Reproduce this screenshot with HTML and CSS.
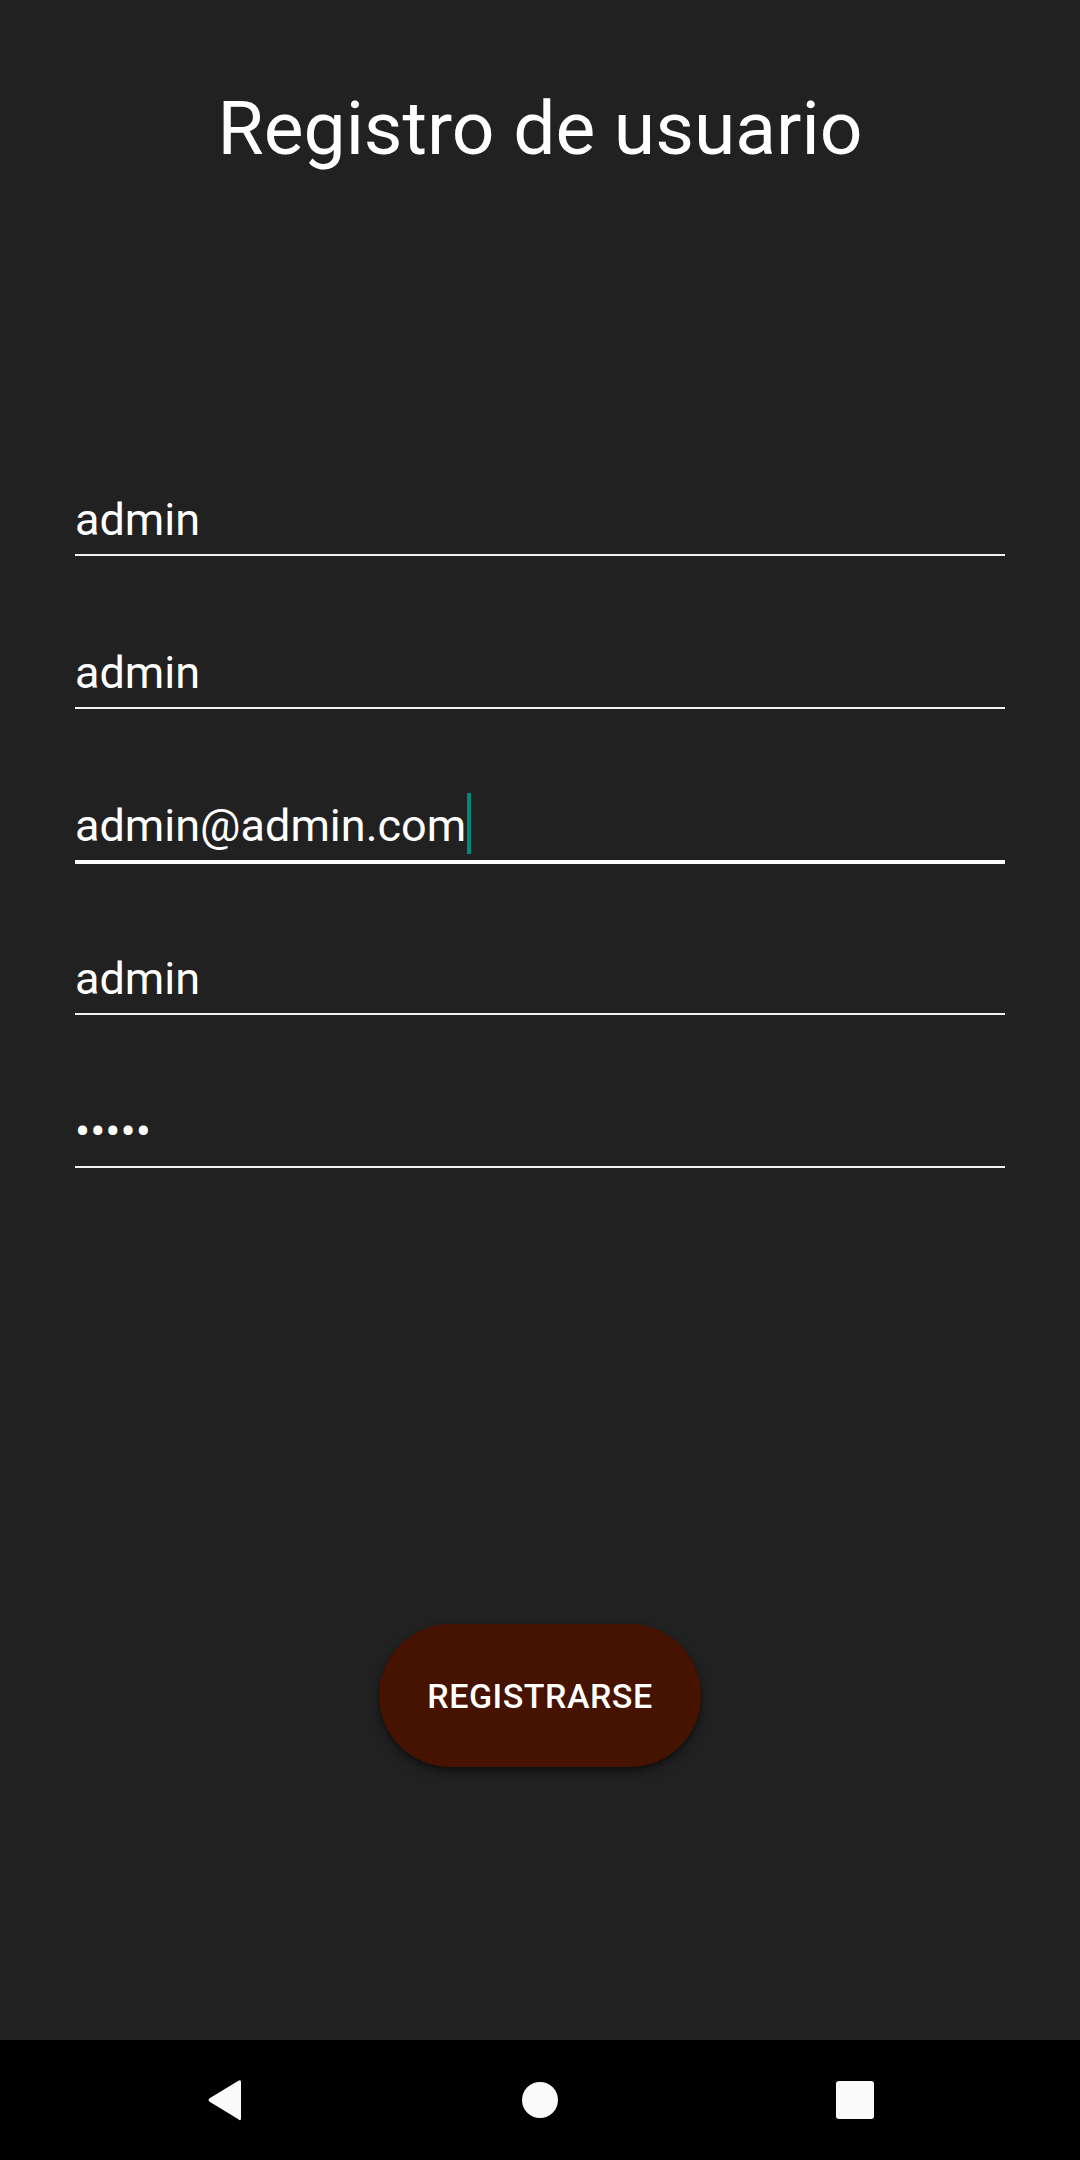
FILE: index.html
```html
<!DOCTYPE html>
<html lang="es">
<head>
<meta charset="utf-8">
<title>Registro de usuario</title>
<link rel="stylesheet" href="styles.css">
</head>
<body>
<div class="screen">
  <main class="content">
    <h1 class="title">Registro de usuario</h1>
    <form class="form">
      <div class="field"><span class="value">admin</span></div>
      <div class="field"><span class="value">admin</span></div>
      <div class="field focused"><span class="value">admin@admin.com</span><span class="cursor"></span></div>
      <div class="field"><span class="value">admin</span></div>
      <div class="field"><span class="value dots">•••••</span></div>
    </form>
    <div class="actions">
      <button class="btn" type="button">REGISTRARSE</button>
    </div>
  </main>
  <nav class="navbar">
    <span class="nav-slot">
      <svg width="40" height="44" viewBox="0 0 40 44"><path d="M36 4 L36 40 Q36 44 33 41 L5 24 Q2 22 5 20 L33 3 Q36 1 36 4 Z" fill="#fafafa"/></svg>
    </span>
    <span class="nav-slot">
      <svg width="40" height="40" viewBox="0 0 40 40"><circle cx="20" cy="20" r="18" fill="#fafafa"/></svg>
    </span>
    <span class="nav-slot">
      <svg width="40" height="40" viewBox="0 0 40 40"><rect x="1" y="1" width="38" height="38" rx="3" fill="#fafafa"/></svg>
    </span>
  </nav>
</div>
</body>
</html>
```

FILE: styles.css
```css
* { box-sizing: border-box; }
html, body {
  margin: 0;
  padding: 0;
  background: #212121;
}
body {
  font-family: Roboto, "Liberation Sans", sans-serif;
  color: #ffffff;
}
.screen {
  width: 1080px;
  height: 2160px;
  display: flex;
  flex-direction: column;
}
.content {
  flex: 1;
  display: flex;
  flex-direction: column;
}
.title {
  margin: 84px 0 0;
  font-size: 75px;
  line-height: 88px;
  font-weight: 400;
  text-align: center;
  color: #ffffff;
}
.form {
  margin: 321px 75px 0;
  display: flex;
  flex-direction: column;
  gap: 90px;
}
.field {
  height: 63px;
  padding-bottom: 7px;
  border-bottom: 2px solid #f2f2f2;
  font-size: 45px;
  line-height: 54px;
  white-space: nowrap;
}
.field.focused {
  border-bottom-color: #ffffff;
  box-shadow: 0 2px 0 #ffffff;
}
.value { color: #ffffff; }
.cursor {
  display: inline-block;
  width: 4px;
  height: 61px;
  margin-top: -8px;
  margin-left: 1px;
  vertical-align: -13px;
  background: #00897b;
}
.actions {
  display: flex;
  justify-content: center;
  margin-top: 456px;
}
.btn {
  width: 322px;
  height: 143px;
  border: none;
  border-radius: 72px;
  background: #451300;
  color: #ffffff;
  font-family: Roboto, "Liberation Sans", sans-serif;
  font-weight: 500;
  font-size: 34px;
  letter-spacing: 0.5px;
  box-shadow: 0 6px 10px rgba(0,0,0,0.35), 0 2px 4px rgba(0,0,0,0.3);
  padding: 0;
}
.navbar {
  height: 120px;
  background: #000000;
  display: flex;
  justify-content: center;
  align-items: center;
  gap: 255px;
}
.nav-slot {
  width: 60px;
  height: 60px;
  display: flex;
  align-items: center;
  justify-content: center;
}
.nav-slot svg { display: block; }
```
